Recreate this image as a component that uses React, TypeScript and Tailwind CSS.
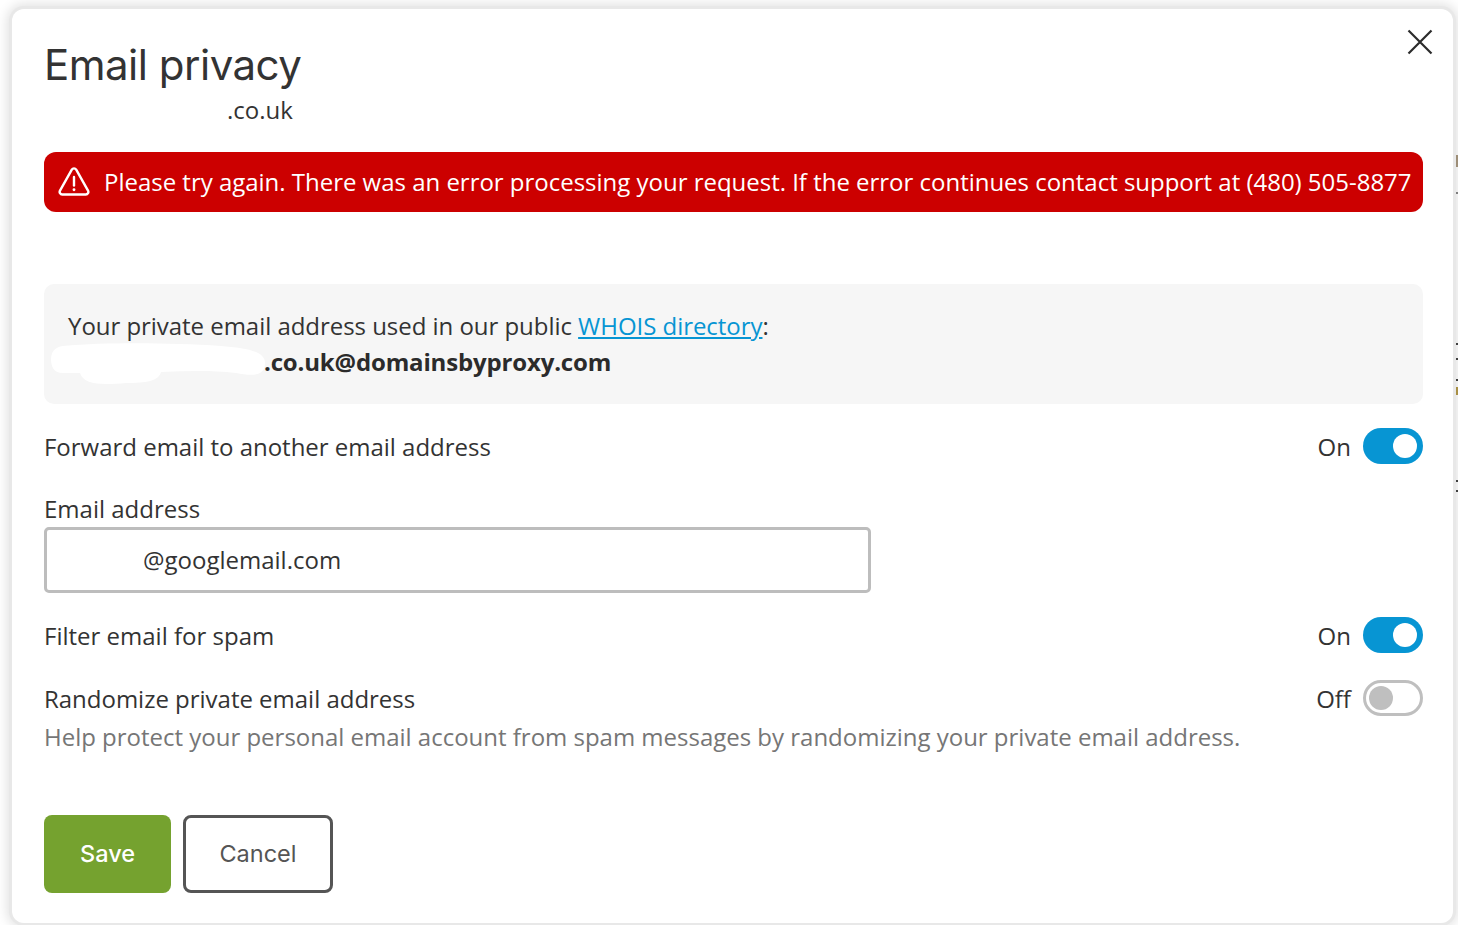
import React from 'react';

const openSans = "font-['Open_Sans',sans-serif]";

const Toggle: React.FC<{ on: boolean; label: string }> = ({ on, label }) => (
  <div className="flex items-center gap-3">
    <span className="translate-y-[1px] text-[24px] leading-9 text-[#333]">{label}</span>
    {on ? (
      <div className="flex h-9 w-[60px] items-center justify-end rounded-full bg-[#0795d3] pr-[6px]">
        <div className="h-6 w-6 rounded-full bg-white" />
      </div>
    ) : (
      <div className="flex h-9 w-[60px] items-center rounded-full border-[3px] border-[#bfbfbf] bg-white pl-[3px]">
        <div className="h-6 w-6 rounded-full bg-[#bfbfbf]" />
      </div>
    )}
  </div>
);

export default function App() {
  return (
    <div className={`relative h-[925px] w-[1458px] overflow-hidden bg-white ${openSans}`}>
      {/* bits of the page behind the dialog */}
      <div className="absolute right-0 top-[155px] h-[12px] w-[2px] bg-[#a89880]" />
      <div className="absolute right-0 top-[192px] h-[2px] w-[2px] bg-[#888]" />
      <div className="absolute right-0 top-[343px] h-[2px] w-[2px] bg-[#444]" />
      <div className="absolute right-0 top-[358px] h-[2px] w-[2px] bg-[#444]" />
      <div className="absolute right-0 top-[379px] h-[2px] w-[2px] bg-[#444]" />
      <div className="absolute right-0 top-[387px] h-[8px] w-[2px] bg-[#b59a4a]" />
      <div className="absolute right-0 top-[480px] h-[2px] w-[2px] bg-[#444]" />
      <div className="absolute right-0 top-[490px] h-[2px] w-[2px] bg-[#444]" />

      <div className="relative h-full w-full pb-[2px] pl-[12px] pr-[5px] pt-[9px]">
        <div className="relative h-full rounded-[12px] bg-white pl-[32px] pr-[30px] pt-[31px] shadow-[0_0_0_3px_#e8e8e8,0_0_12px_5px_rgba(0,0,0,0.12)]">
          <button className="absolute right-[20px] top-[20px] text-[#2b2b2b]">
            <svg width="26" height="26" viewBox="0 0 26 26" fill="none" stroke="currentColor" strokeWidth="2.2">
              <path d="M1.5 1.5 L24.5 24.5 M24.5 1.5 L1.5 24.5" />
            </svg>
          </button>

          <h1 className="font-['Inter',sans-serif] text-[42px] font-normal leading-[50px] tracking-[-0.5px] text-[#333]">Email privacy</h1>
          <p className="mt-[2px] pl-[183px] text-[24px] leading-9 text-[#333]">.co.uk</p>

          <div className="mt-[24px] flex h-[60px] items-center rounded-[12px] bg-[#cc0000] pl-[14px] text-white">
            <svg width="32" height="32" viewBox="0 0 32 32" fill="none" stroke="currentColor" strokeWidth="2.4" strokeLinejoin="round" strokeLinecap="round">
              <path d="M13.8 3.6a2.6 2.6 0 0 1 4.4 0L30 24.6a2.6 2.6 0 0 1-2.2 3.9H4.2A2.6 2.6 0 0 1 2 24.6Z" />
              <path d="M16 11 V19.5" />
              <path d="M16 23.6 V23.8" strokeWidth="2.8" />
            </svg>
            <span className="ml-[14px] whitespace-nowrap text-[24px] leading-9 tracking-[-0.017px]">
              Please try again. There was an error processing your request. If the error continues contact support at (480) 505-8877
            </span>
          </div>

          <div className="relative mt-[72px] h-[120px] rounded-[10px] bg-[#f6f6f6] px-[24px] pt-[24px] text-[24px] leading-9 text-[#333]">
            <p className="tracking-[-0.04px]">
              Your private email address used in our public{' '}
              <a href="#" className="text-[#0795d3] underline">WHOIS directory</a>:
            </p>
            <p className="pl-[196px] font-bold tracking-[-0.16px] text-[#2b2b2b]">.co.uk@domainsbyproxy.com</p>
            <svg className="absolute left-[7px] top-[59px]" width="216" height="44" viewBox="0 0 216 44" fill="white">
              <path d="M12 3 C60 -1 120 0 170 3 C195 5 214 8 214 20 C214 34 200 33 185 30 C160 27 135 28 110 29 C108 38 95 40 75 40 C50 42 33 42 29 30 L12 30 C3 30 0 24 0 16 C0 9 4 4 12 3 Z" />
            </svg>
          </div>

          <div className="mt-[24px] flex h-9 items-center justify-between">
            <span className="translate-y-[1px] text-[24px] leading-9 tracking-[-0.015px] text-[#333]">Forward email to another email address</span>
            <Toggle on label="On" />
          </div>

          <label className="mt-[27px] block text-[24px] leading-9 text-[#333]">Email address</label>
          <div className="flex h-[66px] w-[827px] items-center rounded-[5px] border-[3px] border-[#bdbdbd] pl-[96px] text-[24px] text-[#333]">
            @googlemail.com
          </div>

          <div className="mt-[24px] flex h-9 items-center justify-between">
            <span className="translate-y-[1px] text-[24px] leading-9 text-[#333]">Filter email for spam</span>
            <Toggle on label="On" />
          </div>

          <div className="mt-[27px] flex h-9 items-center justify-between">
            <span className="translate-y-[1px] text-[24px] leading-9 tracking-[-0.015px] text-[#333]">Randomize private email address</span>
            <Toggle on={false} label="Off" />
          </div>
          <p className="mt-[3px] text-[24px] leading-9 tracking-[-0.01px] text-[#767676]">
            Help protect your personal email account from spam messages by randomizing your private email address.
          </p>

          <div className="mt-[60px] flex gap-3 font-['Inter',sans-serif] text-[23.5px]">
            <button className="h-[78px] w-[127px] rounded-[8px] bg-[#75a22f] font-medium text-white">Save</button>
            <button className="h-[78px] w-[150px] rounded-[8px] border-[3px] border-[#555] bg-white text-[#555]">Cancel</button>
          </div>
        </div>
      </div>
    </div>
  );
}
